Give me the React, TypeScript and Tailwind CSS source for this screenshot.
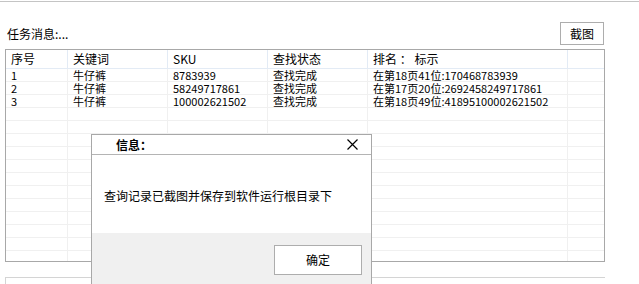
const rows = [
  ["1", "牛仔裤", "8783939", "查找完成", "在第18页41位:170468783939"],
  ["2", "牛仔裤", "58249717861", "查找完成", "在第17页20位:2692458249717861"],
  ["3", "牛仔裤", "100002621502", "查找完成", "在第18页49位:41895100002621502"],
];

const cols = ["w-[62px]", "w-[100px]", "w-[100px]", "w-[100px]", "w-[200px]"];

function Row({ cells }: { cells: string[] }) {
  return (
    <div className="flex h-[13px] shrink-0 border-b border-[#f0f0f0]">
      {cols.map((w, i) => (
        <div
          key={i}
          className={`${w} shrink-0 border-r border-[#f0f0f0] pl-[5px] text-[11px] leading-[12px] whitespace-nowrap`}
        >
          {cells[i] ?? ""}
        </div>
      ))}
      <div className="flex-1" />
    </div>
  );
}

export default function App() {
  const header = ["序号", "关键词", "SKU", "查找状态", "排名 ： 标示"];
  const empty = Array.from({ length: 12 }, () => [] as string[]);

  return (
    <div
      className="relative w-[639px] h-[284px] overflow-hidden bg-white text-black"
      style={{ fontFamily: '"Noto Sans CJK SC", "Noto Sans", sans-serif' }}
    >
      <div className="mt-px border-t border-[#c4c4c4]" />

      <div className="flex items-start justify-between h-[47px] pl-[7px] pr-[35px]">
        <div className="mt-[24px] text-[12px] leading-[16px]">任务消息:...</div>
        <button className="mt-[20px] w-[44px] h-[23px] border border-[#adadad] bg-white text-[12px] leading-[12px] flex items-center justify-center">
          截图
        </button>
      </div>

      <div className="ml-[5px] w-[600px] h-[213px] border border-[#a8a8a8] flex flex-col overflow-hidden">
        <div className="flex h-[19px] shrink-0 border-b border-[#e3ebf5]">
          {cols.map((w, i) => (
            <div
              key={i}
              className={`${w} shrink-0 border-r border-[#e3ebf5] pl-[5px] text-[12px] leading-[18px] whitespace-nowrap`}
            >
              {header[i]}
            </div>
          ))}
          <div className="flex-1" />
        </div>
        {rows.map((r, i) => (
          <Row key={i} cells={r} />
        ))}
        {empty.map((r, i) => (
          <Row key={`e${i}`} cells={r} />
        ))}
      </div>

      <div className="mt-[15px] ml-[5px] w-[600px] h-[20px] border-t border-l border-[#d4d4d4]" />

      <div className="absolute left-[91px] top-[134px] w-[281px] h-[170px] border border-[#a8a8a8] bg-white flex flex-col">
        <div className="flex items-center justify-between h-[20px] shrink-0 border-b border-[#b4b4b4] pl-[24px] pr-[13px]">
          <span className="text-[12px] font-bold leading-[12px]">信息：</span>
          <svg width="11" height="11" viewBox="0 0 11 11" className="block">
            <path d="M0.5 0.5 L10.5 10.5 M10.5 0.5 L0.5 10.5" stroke="#000" strokeWidth="1.2" />
          </svg>
        </div>
        <div className="h-[78px] shrink-0 flex items-center pl-[12px] pt-[4px] text-[12px] leading-[12px]">
          查询记录已截图并保存到软件运行根目录下
        </div>
        <div className="flex-1 bg-[#f0f0f0] flex justify-end items-start pt-[12px] pr-[9px]">
          <button className="w-[88px] h-[30px] border border-[#adadad] bg-white text-[12px] leading-[12px] flex items-center justify-center">
            确定
          </button>
        </div>
      </div>
    </div>
  );
}
